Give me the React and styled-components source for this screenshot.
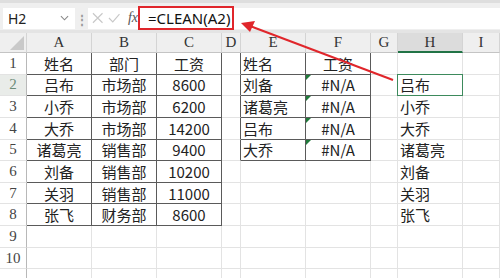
import styled, { createGlobalStyle } from "styled-components"

const GlobalStyle = createGlobalStyle`
  html, body {
    margin: 0;
    padding: 0;
    background: #ffffff;
    overflow: hidden;
  }
  body {
    font-family: "Noto Sans CJK SC", "Noto Sans", sans-serif;
  }
`

const columns = ['A', 'B', 'C', 'D', 'E', 'F', 'G', 'H', 'I']
const colAlign = ['center', 'center', 'center', 'left', 'left', 'center', 'left', 'left', 'left']

const data = [
  ['姓名', '部门', '工资', '', '姓名', '工资', '', '', ''],
  ['吕布', '市场部', '8600', '', '刘备', '#N/A', '', '吕布', ''],
  ['小乔', '市场部', '6200', '', '诸葛亮', '#N/A', '', '小乔', ''],
  ['大乔', '市场部', '14200', '', '吕布', '#N/A', '', '大乔', ''],
  ['诸葛亮', '销售部', '9400', '', '大乔', '#N/A', '', '诸葛亮', ''],
  ['刘备', '销售部', '10200', '', '', '', '', '刘备', ''],
  ['关羽', '销售部', '11000', '', '', '', '', '关羽', ''],
  ['张飞', '财务部', '8600', '', '', '', '', '张飞', ''],
  ['', '', '', '', '', '', '', '', ''],
  ['', '', '', '', '', '', '', '', ''],
  ['', '', '', '', '', '', '', '', ''],
]

// which cells sit inside a bordered table
const inTable = (r, c) => (r < 8 && c < 3) || (r < 5 && (c === 4 || c === 5))

const App = () => {
  return (
    <Sheet>
      <GlobalStyle />
      <TopStrip />
      <FormulaBar>
        <NameBox>
          <span>H2</span>
          <Chevron viewBox="0 0 10 6">
            <path d="M1 1 L5 5 L9 1" fill="none" stroke="#888" strokeWidth="1.2" />
          </Chevron>
        </NameBox>
        <Dots>⋮</Dots>
        <FormulaInput>
          <FxIcons>
            <svg width="12" height="12" viewBox="0 0 12 12">
              <path d="M1 1 L11 11 M11 1 L1 11" stroke="#c8c8c8" strokeWidth="1.2" />
            </svg>
            <svg width="13" height="12" viewBox="0 0 13 12">
              <path d="M1 6 L5 10 L12 2" fill="none" stroke="#c8c8c8" strokeWidth="1.2" />
            </svg>
            <Fx>fx</Fx>
          </FxIcons>
          <Formula>=CLEAN(A2)</Formula>
        </FormulaInput>
      </FormulaBar>
      <Divider />
      <Grid>
        <Corner>
          <svg width="14" height="14" viewBox="0 0 14 14">
            <path d="M14 0 L14 14 L0 14 Z" fill="#c9c9c9" />
          </svg>
        </Corner>
        {columns.map((col) => (
          <ColHead key={col} $active={col === 'H'}>{col}</ColHead>
        ))}
        {data.map((row, r) => [
          <RowHead key={`h${r}`} $active={r === 1}>{r < 10 ? r + 1 : ''}</RowHead>,
          ...row.map((val, c) => {
            const boxed = inTable(r, c)
            const darkRight = boxed || (c === 3 && r < 5)
            return (
              <Cell
                key={`${r}-${c}`}
                $align={colAlign[c]}
                $darkRight={darkRight}
                $darkBottom={boxed}
                $flag={c === 5 && r >= 1 && r <= 4}
                $selected={c === 7 && r === 1}
              >
                {val}
              </Cell>
            )
          }),
        ])}
      </Grid>
      <Arrow width="500" height="278" viewBox="0 0 500 278">
        <line x1="393" y1="80" x2="250" y2="26" stroke="#e0262b" strokeWidth="2" />
        <path d="M241 23 L255 21 L250 32 Z" fill="#e0262b" />
      </Arrow>
    </Sheet>
  )
}

const Sheet = styled.div`
  position: relative;
  width: 500px;
  height: 278px;
  overflow: hidden;
  background: #ffffff;
`

const TopStrip = styled.div`
  height: 3px;
  background: #dedede;
`

const FormulaBar = styled.div`
  display: flex;
  align-items: center;
  height: 27px;
  padding: 0 0 0 3px;
  background: #efefef;
  box-sizing: border-box;
`

const NameBox = styled.div`
  display: flex;
  align-items: center;
  justify-content: space-between;
  width: 72px;
  height: 21px;
  margin-top: 3px;
  padding: 0 6px 0 5px;
  box-sizing: border-box;
  background: #ffffff;
  font-family: "Noto Sans", sans-serif;
  font-size: 14px;
  color: #222;
`

const Chevron = styled.svg`
  width: 9px;
  height: 6px;
`

const Dots = styled.div`
  width: 13px;
  margin-top: 3px;
  text-align: center;
  font-size: 12px;
  color: #999;
  font-weight: bold;
`

const FormulaInput = styled.div`
  flex: 1;
  display: flex;
  align-items: center;
  height: 21px;
  margin-top: 3px;
  background: #ffffff;
`

const FxIcons = styled.div`
  display: flex;
  align-items: center;
  gap: 5px;
  padding-left: 4px;
  width: 50px;
  box-sizing: border-box;
`

const Fx = styled.span`
  font-family: "Liberation Serif", serif;
  font-style: italic;
  font-size: 14px;
  color: #555;
  margin-left: 2px;
`

const Formula = styled.div`
  display: flex;
  align-items: center;
  width: 96px;
  height: 24px;
  box-sizing: border-box;
  border: 2px solid #e0262b;
  padding-left: 8px;
  font-family: "Noto Sans", sans-serif;
  font-size: 15px;
  color: #111;
`

const Divider = styled.div`
  height: 3px;
  background: #e4e4e4;
`

const Grid = styled.div`
  display: grid;
  grid-template-columns: 27px 65px 65px 65px 19px 65px 65px 27px 65px 37px;
  grid-template-rows: 20px repeat(11, 21.65px);
`

const Corner = styled.div`
  display: flex;
  align-items: flex-end;
  justify-content: flex-end;
  padding: 0 2px 2px 0;
  background: #efefef;
  border-right: 1px solid #d4d4d4;
  border-bottom: 1px solid #c4c4c4;
`

const ColHead = styled.div`
  display: flex;
  align-items: center;
  justify-content: center;
  background: ${(p) => (p.$active ? '#dcdcdc' : '#efefef')};
  border-right: 1px solid #d4d4d4;
  border-bottom: ${(p) => (p.$active ? '2px solid #217346' : '1px solid #c4c4c4')};
  font-family: "Liberation Serif", serif;
  font-size: 15px;
  color: #333;
  overflow: hidden;
`

const RowHead = styled.div`
  display: flex;
  align-items: center;
  justify-content: center;
  background: ${(p) => (p.$active ? '#e9ece9' : '#ffffff')};
  border-right: 1px solid #b8b8b8;
  border-bottom: 1px solid #e3e3e3;
  font-family: "Liberation Serif", serif;
  font-size: 15px;
  color: ${(p) => (p.$active ? '#6d8c79' : '#444')};
`

const Cell = styled.div`
  position: relative;
  display: flex;
  align-items: center;
  justify-content: ${(p) => (p.$align === 'center' ? 'center' : 'flex-start')};
  padding: 0 2px;
  border-right: 1px solid ${(p) => (p.$darkRight ? '#5a5a5a' : '#e3e3e3')};
  border-bottom: 1px solid ${(p) => (p.$darkBottom ? '#5a5a5a' : '#e3e3e3')};
  font-size: 15px;
  color: #222;
  white-space: nowrap;
  overflow: visible;

  &::before {
    content: '';
    display: ${(p) => (p.$flag ? 'block' : 'none')};
    position: absolute;
    top: 0;
    left: 0;
    border-top: 5px solid #1f7a3a;
    border-right: 5px solid transparent;
  }

  &::after {
    content: '';
    display: ${(p) => (p.$selected ? 'block' : 'none')};
    position: absolute;
    inset: -1px -1px -1px -1px;
    border: 1px solid #3d8a5c;
    pointer-events: none;
  }
`

const Arrow = styled.svg`
  position: absolute;
  top: 0;
  left: 0;
  pointer-events: none;
`

export default App
